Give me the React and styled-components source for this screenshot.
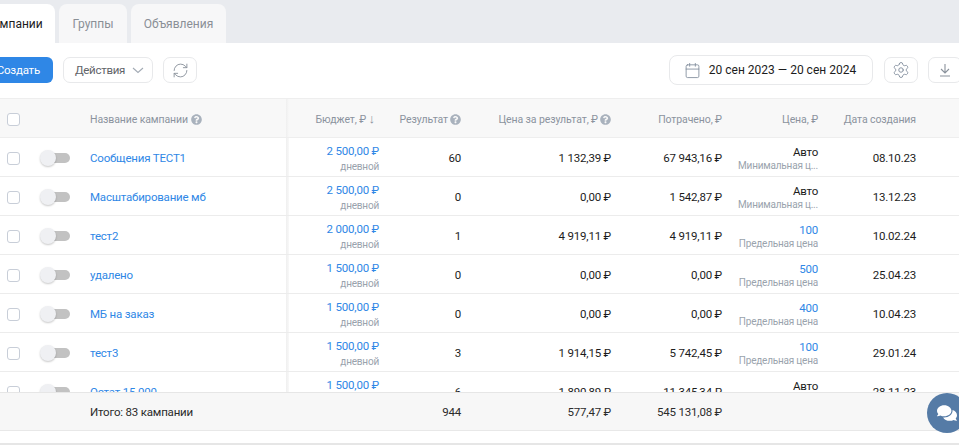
import { createGlobalStyle, css, styled } from "styled-components";
import { Calendar, RefreshCw, Settings } from "lucide-react";
import { FaComments, FaQuestionCircle } from "react-icons/fa";

const BLUE = "#2f87e6";
const WIDTHS = [92, 82, 150, 111, 96, 98];

const campaigns = [
  { name: "Сообщения ТЕСТ1", budget: "2 500,00 ₽", result: "60", cost: "1 132,39 ₽", spent: "67 943,16 ₽", price: "Авто", note: "Минимальная ц...", date: "08.10.23" },
  { name: "Масштабирование мб", budget: "2 500,00 ₽", result: "0", cost: "0,00 ₽", spent: "1 542,87 ₽", price: "Авто", note: "Минимальная ц...", date: "13.12.23" },
  { name: "тест2", budget: "2 000,00 ₽", result: "1", cost: "4 919,11 ₽", spent: "4 919,11 ₽", price: "100", note: "Предельная цена", date: "10.02.24" },
  { name: "удалено", budget: "1 500,00 ₽", result: "0", cost: "0,00 ₽", spent: "0,00 ₽", price: "500", note: "Предельная цена", date: "25.04.23" },
  { name: "МБ на заказ", budget: "1 500,00 ₽", result: "0", cost: "0,00 ₽", spent: "0,00 ₽", price: "400", note: "Предельная цена", date: "10.04.23" },
  { name: "тест3", budget: "1 500,00 ₽", result: "3", cost: "1 914,15 ₽", spent: "5 742,45 ₽", price: "100", note: "Предельная цена", date: "29.01.24" },
  { name: "Остат 15 000", budget: "1 500,00 ₽", result: "6", cost: "1 890,89 ₽", spent: "11 345,34 ₽", price: "Авто", note: "Минимальная ц...", date: "28.11.23" },
];

const GlobalStyle = createGlobalStyle`
  html, body {
    margin: 0;
    background: #fff;
    overflow: hidden;
    font-family: Roboto, "Noto Sans", sans-serif;
  }
`;

export default function App() {
  return (
    <Page>
      <GlobalStyle />
      <Tabs>
        <Tab $active $width={82}>Кампании</Tab>
        <Tab $width={68}>Группы</Tab>
        <Tab $width={95}>Объявления</Tab>
      </Tabs>
      <Toolbar>
        <CreateButton>Создать</CreateButton>
        <ActionsButton>
          Действия
          <svg width="12" height="7" viewBox="0 0 12 7" fill="none" stroke="#a3abb5" strokeWidth="1.1">
            <path d="M1 1l5 4.5L11 1" />
          </svg>
        </ActionsButton>
        <IconButton $width={34} $marginLeft={10}>
          <RefreshCw size={17} strokeWidth={1.3} color="#8a929c" />
        </IconButton>
        <DateButton>
          <Calendar size={17} strokeWidth={1.2} color="#7f8b9b" />
          20 сен 2023 — 20 сен 2024
        </DateButton>
        <IconButton $width={34} $marginLeft={11}>
          <Settings size={18} strokeWidth={1.2} color="#7f8b9b" />
        </IconButton>
        <IconButton $width={34} $marginLeft={10}>
          <svg width="16" height="16" viewBox="0 0 16 16" fill="none" stroke="#8a929c" strokeWidth="1.1">
            <path d="M8 2v8.5M4 7l4 4 4-4M3 14h10" />
          </svg>
        </IconButton>
      </Toolbar>
      <Table>
        <HeadRow>
          <Fixed>
            <CheckCell><Check /></CheckCell>
            <ToggleCell />
            <NameCell>
              <HeadText>Название кампании</HeadText>
              <Help />
            </NameCell>
          </Fixed>
          <SortCell $width={WIDTHS[0]}><HeadText>Бюджет, ₽ <SortArrow>↓</SortArrow></HeadText></SortCell>
          <Cell $width={WIDTHS[1]}><HeadText>Результат</HeadText><Help /></Cell>
          <Cell $width={WIDTHS[2]}><HeadText>Цена за результат, ₽</HeadText><Help /></Cell>
          <Cell $width={WIDTHS[3]}><HeadText>Потрачено, ₽</HeadText></Cell>
          <Cell $width={WIDTHS[4]}><HeadText>Цена, ₽</HeadText></Cell>
          <Cell $width={WIDTHS[5]}><HeadText>Дата создания</HeadText></Cell>
        </HeadRow>
        <Body>
          {campaigns.map((c) => (
            <Row key={c.name}>
              <Fixed>
                <CheckCell><Check /></CheckCell>
                <ToggleCell><Toggle /></ToggleCell>
                <NameCell><NameLink>{c.name}</NameLink></NameCell>
              </Fixed>
              <Cell $width={WIDTHS[0]}>
                <Stack $line={16}>
                  <Link>{c.budget}</Link>
                  <Note>дневной</Note>
                </Stack>
              </Cell>
              <Cell $width={WIDTHS[1]}>{c.result}</Cell>
              <Cell $width={WIDTHS[2]}>{c.cost}</Cell>
              <Cell $width={WIDTHS[3]}>{c.spent}</Cell>
              <Cell $width={WIDTHS[4]}>
                <Stack $line={14}>
                  {c.price === "Авто" ? <span>{c.price}</span> : <Link>{c.price}</Link>}
                  <Note>{c.note}</Note>
                </Stack>
              </Cell>
              <Cell $width={WIDTHS[5]}>{c.date}</Cell>
            </Row>
          ))}
        </Body>
        <FootRow>
          <Fixed>
            <CheckCell />
            <ToggleCell />
            <NameCell>Итого: 83 кампании</NameCell>
          </Fixed>
          <Cell $width={WIDTHS[0]} />
          <Cell $width={WIDTHS[1]}>944</Cell>
          <Cell $width={WIDTHS[2]}>577,47 ₽</Cell>
          <Cell $width={WIDTHS[3]}>545 131,08 ₽</Cell>
        </FootRow>
      </Table>
      <BottomLine />
      <ChatBubble>
        <FaComments size={20} color="#fff" />
      </ChatBubble>
    </Page>
  );
}

// the frozen-column edge runs through header and body
const frozenEdge = css`
  background-image: linear-gradient(90deg, #efefef, #f8f8f8);
  background-position: 286px 0;
  background-size: 3px 100%;
  background-repeat: no-repeat;
`;

const Page = styled.div`
  position: relative;
  width: 959px;
  height: 446px;
  overflow: hidden;
  font-size: 11.5px;
  letter-spacing: -0.2px;
  color: #1c1c1c;
`;

const Tabs = styled.div`
  display: flex;
  gap: 4px;
  height: 43px;
  padding-top: 4px;
  box-sizing: border-box;
  margin-left: -27px;
  background: #e9ebef;
`;

const Tab = styled.div`
  width: ${(props) => props.$width}px;
  display: flex;
  align-items: center;
  justify-content: center;
  border-radius: 8px 8px 0 0;
  background: ${(props) => (props.$active ? "#fff" : "#f7f7f8")};
  color: ${(props) => (props.$active ? "#1c1c1c" : "#8a8f96")};
  font-size: 12px;
  letter-spacing: 0;
`;

const Toolbar = styled.div`
  display: flex;
  align-items: center;
  height: 55px;
  margin-left: -45px;
  padding-bottom: 1px;
  box-sizing: border-box;
`;

const CreateButton = styled.div`
  flex: none;
  width: 98px;
  height: 26px;
  padding-right: 13px;
  box-sizing: border-box;
  display: flex;
  align-items: center;
  justify-content: flex-end;
  border-radius: 6px;
  background: ${BLUE};
  color: #fff;
`;

const ActionsButton = styled.div`
  flex: none;
  width: 90px;
  height: 26px;
  margin-left: 10px;
  padding-left: 3px;
  display: flex;
  align-items: center;
  justify-content: center;
  gap: 7px;
  box-sizing: border-box;
  border: 1px solid #e8e9eb;
  border-radius: 7px;
  color: #5f6368;
  letter-spacing: -0.3px;
`;

const IconButton = styled.div`
  flex: none;
  width: ${(props) => props.$width}px;
  height: 26px;
  margin-left: ${(props) => props.$marginLeft}px;
  display: flex;
  align-items: center;
  justify-content: center;
  box-sizing: border-box;
  border: 1px solid #e8e9eb;
  border-radius: 7px;
`;

const DateButton = styled.div`
  flex: none;
  width: 204px;
  height: 30px;
  margin-left: 472px;
  padding-right: 2px;
  display: flex;
  align-items: center;
  justify-content: center;
  gap: 8px;
  box-sizing: border-box;
  border: 1px solid #e8e9eb;
  border-radius: 8px;
  font-size: 12px;
  letter-spacing: 0;
`;

const Table = styled.div`
  display: flex;
  flex-direction: column;
  height: 332px;
  border-top: 1px solid #eeeeee;
`;

const HeadRow = styled.div`
  ${frozenEdge}
  display: flex;
  flex: none;
  height: 39px;
  padding-top: 2px;
  box-sizing: border-box;
  background-color: #f8f8f8;
  border-bottom: 1px solid #eeeeee;
`;

const Body = styled.div`
  ${frozenEdge}
  flex: 1;
  min-height: 0;
  overflow: hidden;
`;

const Row = styled.div`
  display: flex;
  height: 39px;
  padding-top: 2px;
  box-sizing: border-box;
  border-bottom: 1px solid #ececec;
`;

const FootRow = styled.div`
  display: flex;
  flex: none;
  height: 39px;
  box-sizing: border-box;
  background: #f7f7f7;
  border-top: 1px solid #e6e6e6;
  border-bottom: 1px solid #e8e8e8;
  color: #2b2b2b;
`;

const Fixed = styled.div`
  display: flex;
  flex: none;
  width: 287px;
`;

const CheckCell = styled.div`
  flex: none;
  width: 33px;
  padding-left: 7px;
  box-sizing: border-box;
  display: flex;
  align-items: center;
`;

const ToggleCell = styled.div`
  flex: none;
  width: 57px;
  padding-left: 8px;
  box-sizing: border-box;
  display: flex;
  align-items: center;
`;

const NameCell = styled.div`
  display: flex;
  align-items: center;
  gap: 3px;
  white-space: nowrap;
`;

const Cell = styled.div`
  flex: none;
  width: ${(props) => props.$width}px;
  display: flex;
  align-items: center;
  justify-content: flex-end;
  gap: 2px;
  white-space: nowrap;
`;

const SortCell = styled(Cell)`
  padding-right: 4px;
  box-sizing: border-box;
`;

const Check = styled.div`
  width: 13px;
  height: 13px;
  box-sizing: border-box;
  border: 1.5px solid #c8ced8;
  border-radius: 3px;
  background: #fff;
`;

const Toggle = styled.div`
  position: relative;
  width: 22px;
  height: 10px;
  margin-left: 7px;
  border-radius: 5px;
  background: #c2c2c2;

  &::before {
    content: "";
    position: absolute;
    left: -8px;
    top: -3px;
    width: 16px;
    height: 16px;
    border-radius: 50%;
    background: #eff0f3;
    box-shadow: 0 1px 2px rgba(0, 0, 0, 0.22);
  }
`;

const HeadText = styled.span`
  color: #8b939e;
  font-size: 10.5px;
  letter-spacing: -0.1px;
`;

const SortArrow = styled.span`
  font-size: 13px;
  line-height: 11px;
`;

const Help = styled(FaQuestionCircle)`
  width: 11px;
  height: 11px;
  color: #a9b2bd;
`;

const NameLink = styled.span`
  color: ${BLUE};
`;

const Link = styled.span`
  color: ${BLUE};
`;

const Stack = styled.div`
  display: flex;
  flex-direction: column;
  align-items: flex-end;
  padding-top: 2px;
  line-height: ${(props) => props.$line}px;
`;

const Note = styled.span`
  color: #9aa3ad;
  font-size: 10px;
  letter-spacing: -0.2px;
`;

const BottomLine = styled.div`
  height: 2px;
  margin-top: 12px;
  background: #e6e6e6;
`;

const ChatBubble = styled.div`
  position: absolute;
  left: 927px;
  top: 393px;
  width: 40px;
  height: 40px;
  display: flex;
  align-items: center;
  justify-content: center;
  border-radius: 50%;
  background: #557ba6;
`;
